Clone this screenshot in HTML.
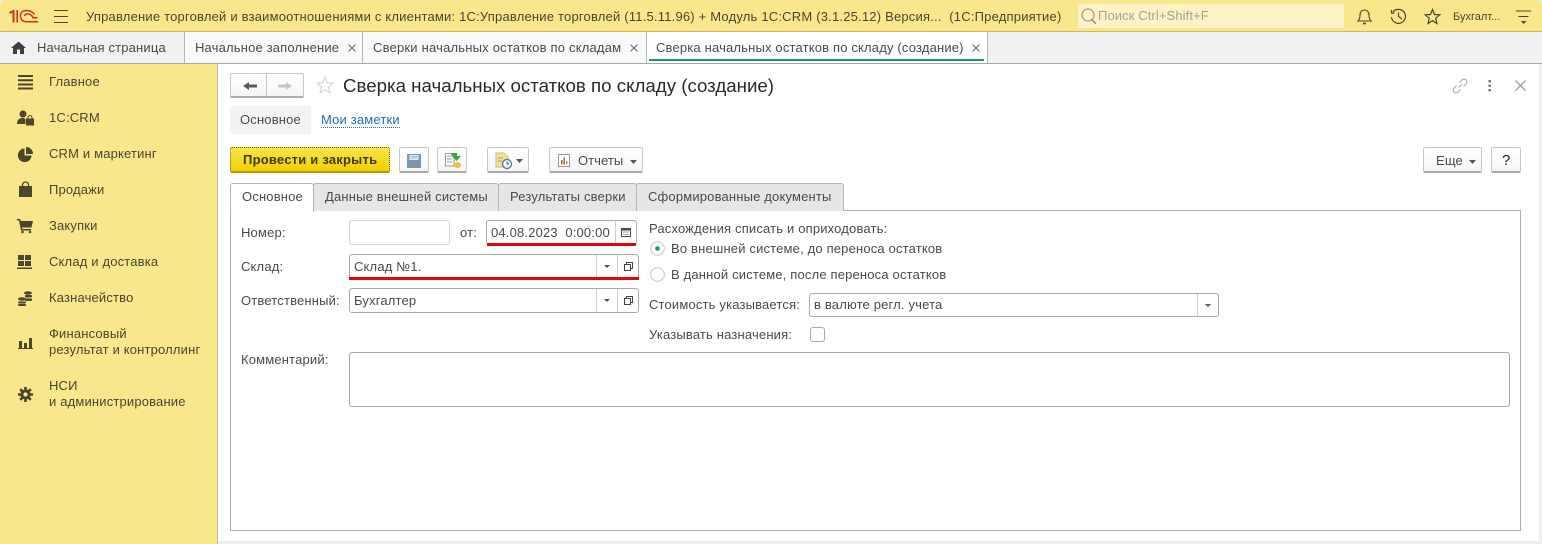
<!DOCTYPE html>
<html><head><meta charset="utf-8"><style>
html,body{margin:0;padding:0;background:#fff}
#p{position:relative;width:1542px;height:544px;overflow:hidden;background:#fff;font-family:"Liberation Sans","Noto Sans CJK SC",sans-serif;font-size:13px;color:#4a4a4a;letter-spacing:.17px}
.t{position:absolute;white-space:nowrap;line-height:16px}
.b{position:absolute;box-sizing:border-box}
.in{position:absolute;box-sizing:border-box;background:#fff;border:1px solid #a9a9a9;border-radius:3px}
.btn{position:absolute;box-sizing:border-box;background:linear-gradient(#fff,#f6f6f6);border:1px solid #c8c8c8;border-bottom:2px solid #ababab;border-radius:2px}
.tab{position:absolute;box-sizing:border-box;background:#e6e6e6;border:1px solid #b5b5b5;border-bottom:none;border-radius:3px 3px 0 0;top:183px;height:28px}
svg{position:absolute;overflow:visible}
.m{color:#4a4630}
</style></head><body><div id="p">
<!-- header -->
<div class="b" style="left:0;top:0;width:1542px;height:32px;background:#ededed"></div>
<div class="b" style="left:0;top:0;width:1542px;height:32px;background:#f9e78c;border-bottom:1px solid #c9b766;border-radius:6px 6px 0 0"></div>
<svg style="left:0;top:0" width="40" height="26" fill="none" stroke="#d0301f"><path d="M9.500 13L13.500 11V22.500" stroke-width="2"/><path d="M17.200 10V22.500" stroke-width="1.600"/><path d="M34.500 14.500C31 9 20.500 9 20.500 15.500C20.500 20.500 23.500 21.800 27 21.800H38" stroke-width="1.500"/><path d="M24.500 16C25.500 13 31 13 33 17.800H37.500" stroke-width="1.500"/></svg>
<svg style="left:54px;top:10px" width="14" height="13"><path d="M0 .5H14M0 6.500H14M0 12.500H14" stroke="#4a4630" stroke-width="1"/></svg>
<div class="t m" style="left:86px;top:9px;letter-spacing:.2px">Управление торговлей и взаимоотношениями с клиентами: 1С:Управление торговлей (11.5.11.96) + Модуль 1С:CRM (3.1.25.12) Версия...&nbsp; (1С:Предприятие)</div>
<div class="b" style="left:1078px;top:4px;width:266px;height:24px;background:#fdf3c6"></div>
<svg style="left:1081px;top:8px" width="16" height="17" fill="none" stroke="#8a8878"><circle cx="7" cy="7" r="6"/><path d="M11 11.500L15 16" stroke-width="1.400"/></svg>
<div class="t" style="left:1098px;top:8px;color:#a5a391;letter-spacing:.1px">Поиск Ctrl+Shift+F</div>
<svg style="left:1356px;top:8px" width="18" height="17" fill="none" stroke="#4a4630" stroke-width="1.100"><path d="M2 13H15C13 11 13 9 13 7C13 4 11 2 8.500 2C6 2 4 4 4 7C4 9 4 11 2 13Z"/><path d="M7 15.500H10" stroke-width="1.600"/></svg>
<svg style="left:1390px;top:8px" width="18" height="17" fill="none" stroke="#4a4630" stroke-width="1.200"><path d="M3 4A7 7 0 1 1 1.500 9M1.500 2V5H4.500M8.500 4.500V8.500L12 11"/></svg>
<svg style="left:1424px;top:8px" width="17" height="17" fill="none" stroke="#4a4630" stroke-width="1.200"><path d="M8.500 1.500L10.500 6.500L15.800 6.800L11.700 10.200L13 15.500L8.500 12.600L4 15.500L5.300 10.200L1.200 6.800L6.500 6.500Z"/></svg>
<div class="t m" style="left:1453px;top:9px;font-size:11px;letter-spacing:0">Бухгалт...</div>
<svg style="left:1516px;top:10px" width="16" height="15"><path d="M0 1H15M2.500 6.500H12.500" stroke="#4a4630"/><path d="M5 11H10.500L7.700 14Z" fill="#4a4630"/></svg>
<!-- tab bar -->
<div class="b" style="left:0;top:32px;width:1542px;height:32px;background:#f2f1f1;border-bottom:1px solid #a8a8a8"></div>
<div class="b" style="left:184px;top:32px;width:1px;height:31px;background:#b5b5b5"></div>
<div class="b" style="left:185px;top:32px;width:178px;height:31px;background:#f9f9f9;border-right:1px solid #b5b5b5"></div>
<div class="b" style="left:363px;top:32px;width:284px;height:31px;background:#f9f9f9;border-right:1px solid #b5b5b5"></div>
<div class="b" style="left:647px;top:32px;width:341px;height:31px;background:#fff;border-right:1px solid #b5b5b5"></div>
<div class="b" style="left:649px;top:59px;width:335px;height:2px;background:#159a62"></div>
<svg style="left:11px;top:41px" width="15" height="13"><path d="M7.500 0.500L15 7H13V13H9V8.500H6V13H2V7H0Z" fill="#3f3f3f"/></svg>
<div class="t" style="left:37px;top:40px">Начальная страница</div>
<div class="t" style="left:195px;top:40px">Начальное заполнение</div>
<div class="t" style="left:373px;top:40px;letter-spacing:.2px">Сверки начальных остатков по складам</div>
<div class="t" style="left:656px;top:40px">Сверка начальных остатков по складу (создание)</div>
<svg style="left:348px;top:44px" width="8" height="8"><path d="M.5 .5L7.500 7.500M7.500 .5L.5 7.500" stroke="#666"/></svg>
<svg style="left:630px;top:44px" width="8" height="8"><path d="M.5 .5L7.500 7.500M7.500 .5L.5 7.500" stroke="#666"/></svg>
<svg style="left:972px;top:44px" width="8" height="8"><path d="M.5 .5L7.500 7.500M7.500 .5L.5 7.500" stroke="#666"/></svg>
<!-- sidebar -->
<div class="b" style="left:0;top:64px;width:218px;height:480px;background:#f9e78c;border-right:1px solid #c9bb78"></div>
<svg style="left:18px;top:75px" width="15" height="14"><path d="M0 1H15M0 5.300H15M0 9.500H15M0 13.500H15" stroke="#4a4630" stroke-width="2"/></svg>
<div class="t m" style="left:49px;top:74px">Главное</div>
<svg style="left:17px;top:110px" width="17" height="16" fill="#4a4630"><circle cx="6" cy="4" r="3.500"/><path d="M0 14C0 9 3 8 6 8C7 8 8 8.500 8.500 9V14Z"/><rect x="9" y="8.500" width="8" height="7"/><path d="M11 9V7.500A2 2 0 0 1 15 7.500V9" fill="none" stroke="#4a4630"/></svg>
<div class="t m" style="left:49px;top:110px">1С:CRM</div>
<svg style="left:18px;top:147px" width="15" height="15" fill="#4a4630"><path d="M6.500 1.500A6.800 6.800 0 1 0 13.500 8.500H6.500Z"/><path d="M8 0A7 7 0 0 1 15 7H8Z"/></svg>
<div class="t m" style="left:49px;top:146px">CRM и маркетинг</div>
<svg style="left:19px;top:182px" width="13" height="15" fill="#4a4630"><path d="M0 4H13V15H0Z"/><path d="M3.500 6V3A3 3 0 0 1 9.500 3V6" fill="none" stroke="#4a4630" stroke-width="1.300"/></svg>
<div class="t m" style="left:49px;top:182px">Продажи</div>
<svg style="left:17px;top:219px" width="16" height="14" fill="#4a4630"><path d="M0 0H3L4 2H16L14.500 8.500H5L5.500 10H14V11.500H4L2 1.500H0Z"/><circle cx="5.500" cy="13" r="1.300"/><circle cx="13" cy="13" r="1.300"/></svg>
<div class="t m" style="left:49px;top:218px">Закупки</div>
<svg style="left:17px;top:255px" width="15" height="14" fill="#4a4630"><path d="M1 0H7V5H1ZM8 0H14V5H8ZM1 6H7V11H1ZM8 6H14V11H8ZM0 12.500H15V14H0Z"/></svg>
<div class="t m" style="left:49px;top:254px">Склад и доставка</div>
<svg style="left:18px;top:291px" width="14" height="15" fill="#4a4630"><ellipse cx="10" cy="2" rx="4" ry="1.800"/><rect x="7" y="4" width="7" height="2.500" rx="1"/><rect x="7" y="7.500" width="7" height="2.500" rx="1"/><ellipse cx="4" cy="8" rx="4" ry="1.800"/><rect x="0" y="10.500" width="8" height="2" rx="1"/><rect x="0" y="13" width="8" height="2" rx="1"/></svg>
<div class="t m" style="left:49px;top:290px">Казначейство</div>
<svg style="left:18px;top:337px" width="15" height="12" fill="#4a4630"><path d="M1 4H4V11H1ZM6 6H9V11H6ZM11 1H14V11H11ZM0 11H15V12H0Z"/></svg>
<div class="t m" style="left:49px;top:326px">Финансовый</div>
<div class="t m" style="left:49px;top:342px">результат и контроллинг</div>
<svg style="left:18px;top:387px" width="15" height="15" viewBox="0 0 15 15"><circle cx="7.500" cy="7.500" r="3.600" fill="none" stroke="#4a4630" stroke-width="3"/><path d="M7.500 0V15M0 7.500H15M2.200 2.200L12.800 12.800M12.800 2.200L2.200 12.800" stroke="#4a4630" stroke-width="2.600" stroke-dasharray="3 100" /><path d="M7.500 15V12M15 7.500H12M12.800 12.800L10.700 10.700M2.200 12.800L4.300 10.700" stroke="#4a4630" stroke-width="2.600"/></svg>
<div class="t m" style="left:49px;top:378px">НСИ</div>
<div class="t m" style="left:49px;top:394px">и администрирование</div>
<!-- right edge -->
<div class="b" style="left:1539px;top:64px;width:3px;height:480px;background:#f0f0f0"></div>
<div class="b" style="left:218px;top:541px;width:1324px;height:3px;background:#efefef"></div>
<!-- title row -->
<div class="btn" style="left:230px;top:73px;width:37px;height:25px;border-radius:2px 0 0 2px"></div>
<div class="btn" style="left:267px;top:73px;width:37px;height:25px;border-left:none;border-radius:0 2px 2px 0"></div>
<svg style="left:243px;top:82px" width="14" height="8"><path d="M14 2.500H6V0L0 4L6 8V5.500H14Z" fill="#5a5a5a"/></svg>
<svg style="left:278px;top:82px" width="14" height="8"><path d="M0 2.500H8V0L14 4L8 8V5.500H0Z" fill="#c8c8c8"/></svg>
<svg style="left:316px;top:76px" width="18" height="18" fill="none" stroke="#d5d5d5" stroke-width="1.100"><path d="M9 1L11.200 6.800L17 7.200L12.500 11L14 17L9 13.700L4 17L5.500 11L1 7.200L6.800 6.800Z"/></svg>
<div class="t" style="left:343px;top:75px;font-size:18.700px;line-height:22px;color:#2a2a2a;letter-spacing:0">Сверка начальных остатков по складу (создание)</div>
<svg style="left:1452px;top:78px" width="16" height="16" fill="none" stroke="#a5a5a5" stroke-width="1"><path d="M6.500 9.500L10 6M7.500 4.500L10 2A2.800 2.800 0 0 1 14 6L11.500 8.500M8.500 11.500L6 14A2.800 2.800 0 0 1 2 10L4.500 7.500"/></svg>
<svg style="left:1488px;top:80px" width="4" height="12" fill="#777"><rect x="0.500" y="0" width="2.500" height="2.500"/><rect x="0.500" y="4.500" width="2.500" height="2.500"/><rect x="0.500" y="9" width="2.500" height="2.500"/></svg>
<svg style="left:1515px;top:80px" width="11" height="11"><path d="M.5 .5L10.500 10.500M10.500 .5L.5 10.500" stroke="#888"/></svg>
<!-- subtabs -->
<div class="b" style="left:230px;top:106px;width:81px;height:28px;background:#f3f3f3;border-radius:2px"></div>
<div class="t" style="left:240px;top:112px">Основное</div>
<div class="t" style="left:321px;top:112px;color:#1d6fb5;border-bottom:1px dotted #1d6fb5;line-height:15px">Мои заметки</div>
<!-- command bar -->
<div class="b" style="left:230px;top:147px;width:160px;height:26px;background:linear-gradient(#fbe44a,#f3d000);border:1px dotted #7a6a00;border-bottom:2px solid #b09a10;border-radius:2px"></div>
<div class="t" style="left:243px;top:152px;font-weight:bold;color:#3f3a10;letter-spacing:.22px">Провести и закрыть</div>
<div class="btn" style="left:399px;top:147px;width:30px;height:26px"></div>
<svg style="left:407px;top:154px" width="14" height="14"><path d="M0 0H14V14H0Z" fill="#7099c0"/><rect x="2.500" y="1" width="9" height="5" fill="#e4ecf3"/><path d="M3.500 2.500H10.500M3.500 4H10.500" stroke="#9fb8cf"/><rect x="3" y="9" width="8" height="5" fill="#8d9299"/></svg>
<div class="btn" style="left:437px;top:147px;width:30px;height:26px"></div>
<svg style="left:444px;top:152px" width="18" height="17"><path d="M1.500 1.500H10V14H1.500Z" fill="#fff" stroke="#9a9a9a"/><path d="M3 4H8M3 7H8M3 10H8" stroke="#999"/><path d="M7 1H13V4H17L12.500 9L8 4Z" fill="#3ca63c"/><ellipse cx="13.500" cy="13" rx="3.500" ry="3" fill="#e8c440"/></svg>
<div class="btn" style="left:487px;top:147px;width:42px;height:26px"></div>
<svg style="left:495px;top:152px" width="18" height="17"><path d="M1 1H9L13 5V15H1Z" fill="#f5e09a" stroke="#d4bc70"/><path d="M3 6H8M3 9H7" stroke="#b09a50"/><circle cx="12" cy="12" r="4.500" fill="#fff" stroke="#5a7aa5" stroke-width="1.400"/><path d="M12 9.500V12H14" stroke="#5a7aa5"/></svg>
<svg style="left:516px;top:159px" width="7" height="4"><path d="M0 0H7L3.500 4Z" fill="#555"/></svg>
<div class="btn" style="left:549px;top:147px;width:94px;height:26px"></div>
<svg style="left:558px;top:154px" width="12" height="13"><path d="M.5 .5H11.500V12.500H.5Z" fill="#fff" stroke="#999"/><path d="M3 6H4.500V10.500H3Z" fill="#c94a3a"/><path d="M5.500 3.500H7V10.500H5.500Z" fill="#3a9a4a"/><path d="M8 7H9.500V10.500H8Z" fill="#d0a030"/></svg>
<div class="t" style="left:578px;top:153px;letter-spacing:.05px">Отчеты</div>
<svg style="left:630px;top:160px" width="7" height="4"><path d="M0 0H7L3.500 4Z" fill="#555"/></svg>
<div class="btn" style="left:1423px;top:147px;width:59px;height:26px"></div>
<div class="t" style="left:1436px;top:153px">Еще</div>
<svg style="left:1469px;top:160px" width="7" height="4"><path d="M0 0H7L3.500 4Z" fill="#555"/></svg>
<div class="btn" style="left:1491px;top:147px;width:30px;height:26px"></div>
<div class="t" style="left:1502px;top:153px;color:#222;font-size:15px;letter-spacing:0">?</div>
<!-- tab panel -->
<div class="b" style="left:230px;top:210px;width:1291px;height:321px;background:#fff;border:1px solid #aeaeae"></div>
<div class="tab" style="left:230px;width:84px;height:29px;background:#fff;z-index:2"></div>
<div class="tab" style="left:313px;width:186px"></div>
<div class="tab" style="left:498px;width:139px"></div>
<div class="tab" style="left:636px;width:208px"></div>
<div class="t" style="left:242px;top:189px;z-index:3">Основное</div>
<div class="t" style="left:325px;top:189px">Данные внешней системы</div>
<div class="t" style="left:510px;top:189px">Результаты сверки</div>
<div class="t" style="left:648px;top:189px">Сформированные документы</div>
<!-- form left -->
<div class="t" style="left:241px;top:225px">Номер:</div>
<div class="in" style="left:349px;top:220px;width:101px;height:25px;border-color:#d2d2d2"></div>
<div class="t" style="left:460px;top:225px">от:</div>
<div class="in" style="left:486px;top:220px;width:151px;height:25px"></div>
<div class="b" style="left:615px;top:221px;width:1px;height:23px;background:#cfcfcf"></div>
<svg style="left:621px;top:227px" width="10" height="10"><path d="M.5 1.500H9.500V9.500H.5Z" fill="#fff" stroke="#4a4a4a"/><path d="M.5 2.500H9.500" stroke="#4a4a4a" stroke-width="2"/><path d="M2.500 5H8M2.500 7.500H8" stroke="#555" stroke-dasharray="1 1"/></svg>
<div class="t" style="left:491px;top:225px">04.08.2023&nbsp; 0:00:00</div>
<div class="b" style="left:487px;top:243px;width:149px;height:3px;background:#e0060c"></div>
<div class="t" style="left:241px;top:259px">Склад:</div>
<div class="in" style="left:349px;top:254px;width:290px;height:25px"></div>
<div class="b" style="left:596px;top:255px;width:1px;height:23px;background:#cfcfcf"></div>
<div class="b" style="left:617px;top:255px;width:1px;height:23px;background:#cfcfcf"></div>
<svg style="left:604px;top:265px" width="6" height="3"><path d="M0 0H6L3 3Z" fill="#555"/></svg>
<svg style="left:624px;top:262px" width="9" height="9" fill="none" stroke="#444"><path d="M2.500 2.500V.5H8.500V6.500H6.500M.5 2.500H6.500V8.500H.5Z"/></svg>
<div class="t" style="left:354px;top:259px">Склад №1.</div>
<div class="b" style="left:349px;top:277px;width:290px;height:3px;background:#e0060c"></div>
<div class="t" style="left:241px;top:293px">Ответственный:</div>
<div class="in" style="left:349px;top:288px;width:290px;height:25px"></div>
<div class="b" style="left:596px;top:289px;width:1px;height:23px;background:#cfcfcf"></div>
<div class="b" style="left:617px;top:289px;width:1px;height:23px;background:#cfcfcf"></div>
<svg style="left:604px;top:299px" width="6" height="3"><path d="M0 0H6L3 3Z" fill="#555"/></svg>
<svg style="left:624px;top:296px" width="9" height="9" fill="none" stroke="#444"><path d="M2.500 2.500V.5H8.500V6.500H6.500M.5 2.500H6.500V8.500H.5Z"/></svg>
<div class="t" style="left:354px;top:293px">Бухгалтер</div>
<!-- form right -->
<div class="t" style="left:649px;top:221px">Расхождения списать и оприходовать:</div>
<svg style="left:650px;top:241px" width="15" height="15"><circle cx="7.500" cy="7.500" r="6.800" fill="#fff" stroke="#c4c4c4"/><circle cx="7.500" cy="7.500" r="2.300" fill="#159a62"/></svg>
<div class="t" style="left:671px;top:241px">Во внешней системе, до переноса остатков</div>
<svg style="left:650px;top:267px" width="15" height="15"><circle cx="7.500" cy="7.500" r="6.800" fill="#fff" stroke="#c4c4c4"/></svg>
<div class="t" style="left:671px;top:267px">В данной системе, после переноса остатков</div>
<div class="t" style="left:649px;top:297px">Стоимость указывается:</div>
<div class="in" style="left:809px;top:293px;width:410px;height:24px"></div>
<div class="b" style="left:1197px;top:294px;width:1px;height:22px;background:#cfcfcf"></div>
<svg style="left:1205px;top:304px" width="6" height="3"><path d="M0 0H6L3 3Z" fill="#555"/></svg>
<div class="t" style="left:814px;top:297px">в валюте регл. учета</div>
<div class="t" style="left:649px;top:327px">Указывать назначения:</div>
<div class="in" style="left:810px;top:327px;width:15px;height:15px"></div>
<div class="t" style="left:241px;top:352px">Комментарий:</div>
<div class="in" style="left:349px;top:352px;width:1161px;height:55px"></div>
</div></body></html>
